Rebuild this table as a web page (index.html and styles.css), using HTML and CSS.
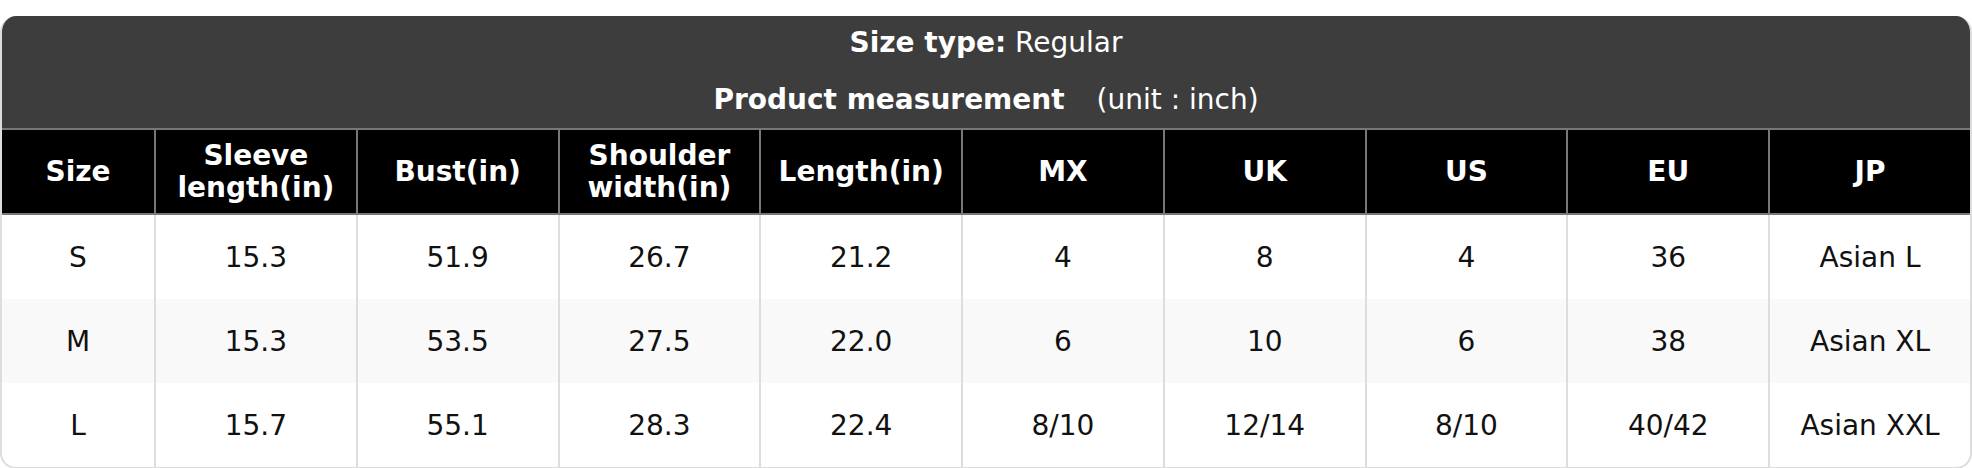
FILE: index.html
```html
<!DOCTYPE html>
<html>
<head>
<meta charset="utf-8">
<link rel="stylesheet" href="styles.css">
</head>
<body>
<div class="chart">
  <div class="title">
    <div class="title-line"><b>Size type:</b> Regular</div>
    <div class="title-line"><b>Product measurement</b><span class="unit">(unit : inch)</span></div>
  </div>
  <table class="size-table">
    <colgroup>
      <col class="col-size">
      <col><col><col><col><col><col><col><col><col>
    </colgroup>
    <thead>
      <tr>
        <th>Size</th>
        <th>Sleeve<br>length(in)</th>
        <th>Bust(in)</th>
        <th>Shoulder<br>width(in)</th>
        <th>Length(in)</th>
        <th>MX</th>
        <th>UK</th>
        <th>US</th>
        <th>EU</th>
        <th>JP</th>
      </tr>
    </thead>
    <tbody>
      <tr>
        <td>S</td><td>15.3</td><td>51.9</td><td>26.7</td><td>21.2</td><td>4</td><td>8</td><td>4</td><td>36</td><td>Asian L</td>
      </tr>
      <tr class="alt">
        <td>M</td><td>15.3</td><td>53.5</td><td>27.5</td><td>22.0</td><td>6</td><td>10</td><td>6</td><td>38</td><td>Asian XL</td>
      </tr>
      <tr>
        <td>L</td><td>15.7</td><td>55.1</td><td>28.3</td><td>22.4</td><td>8/10</td><td>12/14</td><td>8/10</td><td>40/42</td><td>Asian XXL</td>
      </tr>
    </tbody>
  </table>
</div>
</body>
</html>
```
FILE: styles.css
```css
html, body {
  margin: 0;
  padding: 0;
  background: #ffffff;
}
body {
  font-family: "DejaVu Sans", "Liberation Sans", sans-serif;
  padding-top: 16px;
}
.chart {
  border-radius: 16px;
  overflow: hidden;
  border-bottom: 2px solid #dddddd;
  border-left: 2px solid #dddddd;
  border-right: 2px solid #dddddd;
  width: 1972px;
  box-sizing: border-box;
}
.title {
  background: #3d3d3d;
  color: #ffffff;
  text-align: center;
  font-size: 28px;
  padding: 8px 0 9px;
  height: 112px;
  box-sizing: border-box;
  display: flex;
  flex-direction: column;
  gap: 19px;
  margin: 0 -2px;
}
.title-line {
  line-height: 38px;
}
.unit {
  margin-left: 32px;
  font-weight: normal;
}
.size-table {
  width: calc(100% + 4px);
  margin: 0 -2px;
  border-collapse: collapse;
  table-layout: fixed;
}
.col-size {
  width: 154px;
}
.size-table th {
  background: #000000;
  color: #ffffff;
  font-weight: bold;
  font-size: 28px;
  line-height: 32px;
  height: 83px;
  padding: 0;
  border: 2px solid #777777;
  text-align: center;
}
.size-table td {
  font-size: 28px;
  color: #111111;
  text-align: center;
  height: 84px;
  padding: 0;
  border: 2px solid #dddddd;
  border-top: none;
  border-bottom: none;
}
.size-table tr.alt td {
  background: #f9f9f9;
}
```
